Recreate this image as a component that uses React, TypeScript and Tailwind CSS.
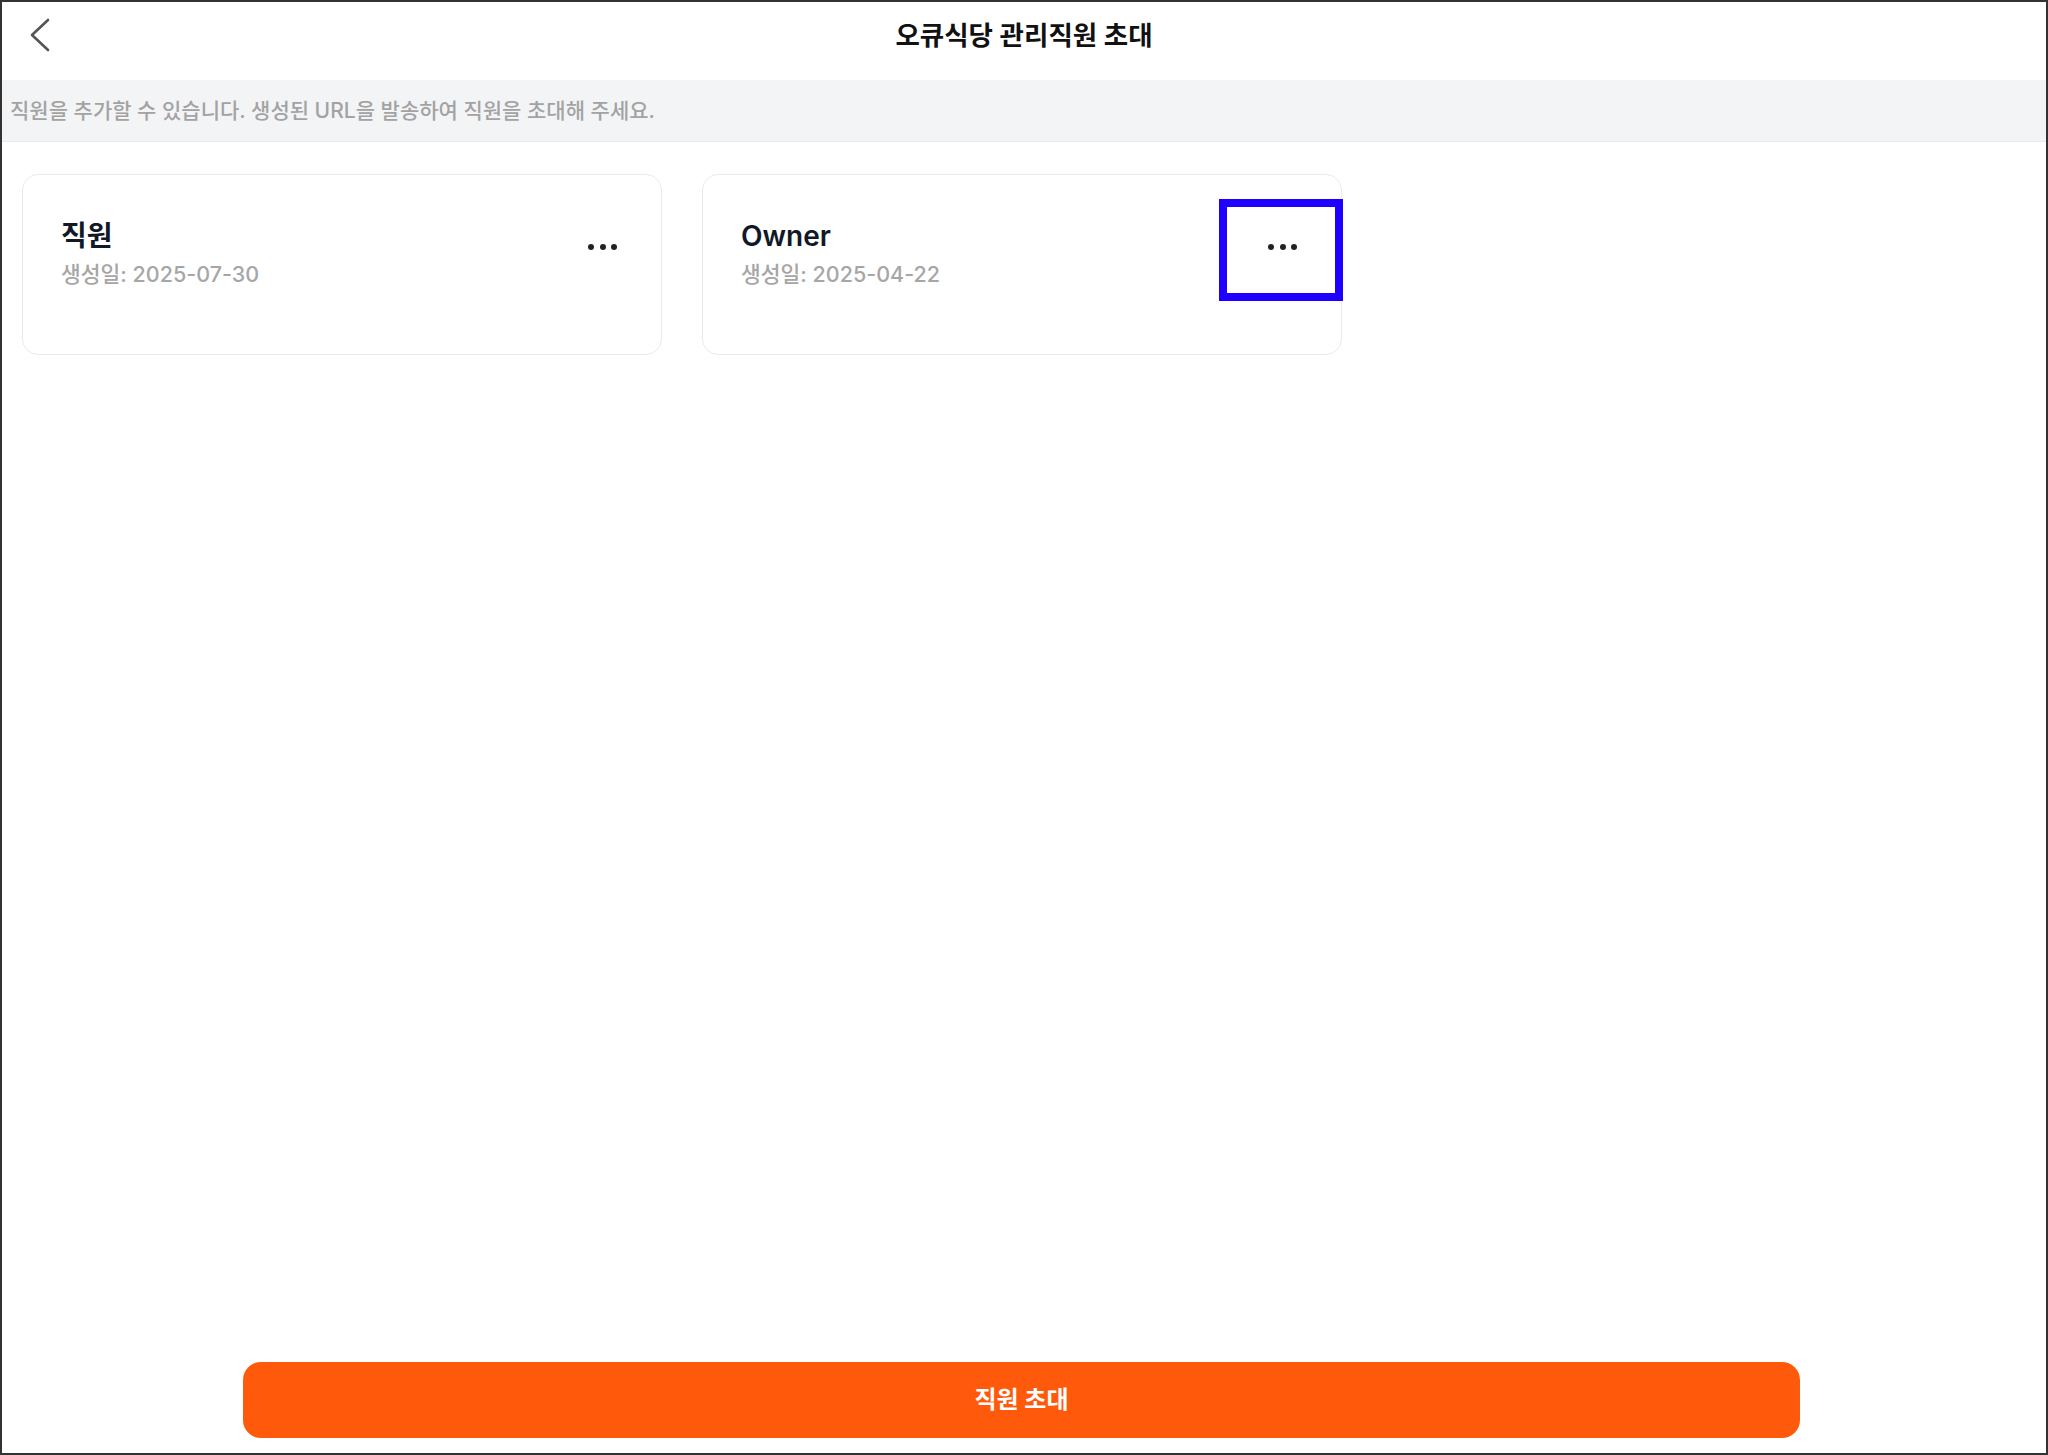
const FONT = 'font-["Inter","Noto_Sans_CJK_KR",sans-serif]';

type Member = { role: string; createdAt: string; highlighted?: boolean };

const members: Member[] = [
  { role: "직원", createdAt: "2025-07-30" },
  { role: "Owner", createdAt: "2025-04-22", highlighted: true },
];

function MoreDots() {
  return (
    <div className="flex items-center gap-[5.5px]">
      <span className="h-[6px] w-[6px] rounded-full bg-[#222]" />
      <span className="h-[6px] w-[6px] rounded-full bg-[#222]" />
      <span className="h-[6px] w-[6px] rounded-full bg-[#222]" />
    </div>
  );
}

function MemberCard({ member }: { member: Member }) {
  return (
    <div className="relative flex h-[181px] justify-between rounded-2xl border border-[#ebebeb] bg-white pl-[38px] pr-[44px]">
      <div className="pt-[43px]">
        <div className="text-[28px] leading-[36px] font-semibold text-[#111827]">
          {member.role}
        </div>
        <div className="mt-[4px] text-[21.5px] leading-[32px] font-medium text-[#a6a6a6]">
          생성일: {member.createdAt}
        </div>
      </div>
      <button className="mt-[69px] self-start" aria-label="more">
        <MoreDots />
      </button>

      {/* 선택 표시 */}
      {member.highlighted && (
        <div className="pointer-events-none absolute top-[24px] right-[-2px] h-[102px] w-[124px] border-[8px] border-[#1f00ff]" />
      )}
    </div>
  );
}

export default function App() {
  return (
    <div
      className={`${FONT} flex h-screen w-full flex-col border-2 border-[#333] bg-white`}
    >
      {/* 헤더 */}
      <header className="grid h-[78px] shrink-0 grid-cols-[1fr_auto_1fr] items-center pb-3">
        <button className="pl-[27px]" aria-label="back">
          <svg width="22" height="34" viewBox="0 0 22 34" fill="none">
            <path
              d="M19 2 L3 17 L19 32"
              stroke="#555"
              strokeWidth="2.6"
              strokeLinecap="round"
              strokeLinejoin="round"
            />
          </svg>
        </button>
        <h1 className="text-[26.5px] leading-[34px] font-semibold text-[#111]">
          오큐식당 관리직원 초대
        </h1>
        <div />
      </header>

      {/* 안내 문구 */}
      <div className="flex h-[62px] shrink-0 items-center border-b border-[#e8e9eb] bg-[#f3f4f6] pl-2">
        <p className="text-[21px] font-medium text-[#a3a3a3]">
          직원을 추가할 수 있습니다. 생성된 URL을 발송하여 직원을 초대해 주세요.
        </p>
      </div>

      {/* 직원 카드 목록 */}
      <div className="flex-1 px-5 pt-[32px]">
        <div className="grid grid-cols-[repeat(3,640px)] gap-10">
          {members.map((m) => (
            <MemberCard key={m.role} member={m} />
          ))}
        </div>
      </div>

      {/* 하단 버튼 */}
      <div className="flex shrink-0 justify-center pr-[5px] pb-[15px]">
        <button className="h-[76px] w-[1557px] rounded-[18px] bg-[#ff5a0b] text-[24px] font-bold text-white">
          직원 초대
        </button>
      </div>
    </div>
  );
}
